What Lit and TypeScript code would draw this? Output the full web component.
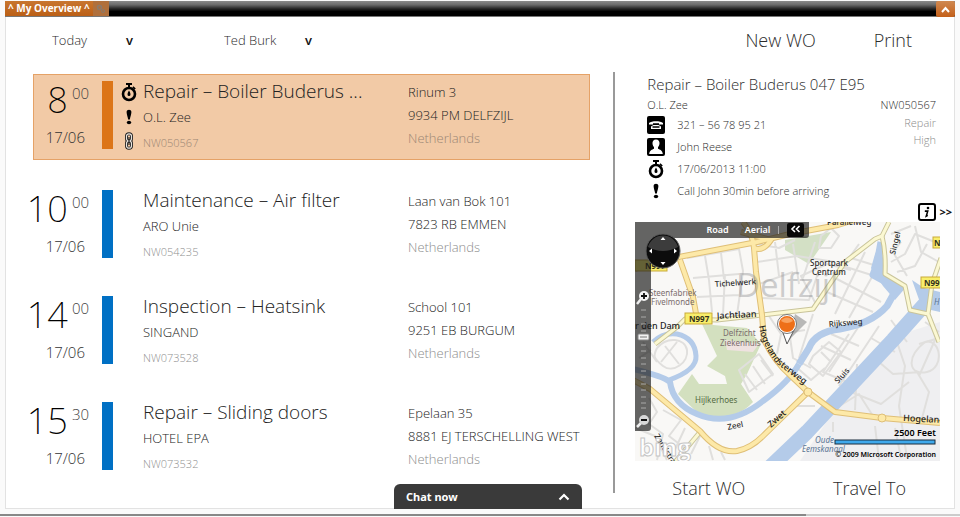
import { LitElement, html, svg, css, nothing } from "lit";
import { customElement, property } from "lit/decorators.js";

interface WorkOrder {
  hour: string;
  minute: string;
  title: string;
  client: string;
  code: string;
  street: string;
  city: string;
  selected?: boolean;
}

const ORDERS: WorkOrder[] = [
  { hour: "8", minute: "00", title: "Repair – Boiler Buderus ...", client: "O.L. Zee", code: "NW050567", street: "Rinum 3", city: "9934 PM DELFZIJL", selected: true },
  { hour: "10", minute: "00", title: "Maintenance – Air filter", client: "ARO Unie", code: "NW054235", street: "Laan van Bok 101", city: "7823 RB EMMEN" },
  { hour: "14", minute: "00", title: "Inspection – Heatsink", client: "SINGAND", code: "NW073528", street: "School 101", city: "9251 EB BURGUM" },
  { hour: "15", minute: "30", title: "Repair – Sliding doors", client: "HOTEL EPA", code: "NW073532", street: "Epelaan 35", city: "8881 EJ TERSCHELLING WEST" },
];

const stopwatch = html`<svg width="18" height="20" viewBox="0 0 18 20" aria-hidden="true">
  <path d="M6 1h6v2h-2v2h-2v-2h-2z" />
  <path d="M13.4 4.2l2.4 2.2-1.2 1.2-2.2-2z" />
  <circle cx="9" cy="12" r="6" fill="none" stroke="#000" stroke-width="2.6" />
  <path d="M9 8.4c.8 1.6 1.5 2.5 1.5 4a1.5 1.5 0 0 1-3 0c0-1.5.7-2.4 1.5-4z" />
</svg>`;

const exclaim = html`<svg width="18" height="16" viewBox="0 0 18 16" aria-hidden="true">
  <path d="M6.6 3c0-3 4.8-3 4.800 0 0 2.600-1.200 4.600-1.500 7.500h-1.800c-.3-2.900-1.500-4.900-1.500-7.500z" />
  <ellipse cx="9" cy="13.5" rx="2.200" ry="1.7" />
</svg>`;

const chain = html`<svg width="18" height="18" viewBox="0 0 18 18" aria-hidden="true">
  <g fill="none" stroke="#222" stroke-width="3">
    <rect x="6.5" y="1.8" width="5" height="7.2" rx="2.5" />
    <rect x="6.5" y="9" width="5" height="7.2" rx="2.5" />
  </g>
  <g fill="none" stroke="#e9e4de" stroke-width="1.2">
    <rect x="6.5" y="1.8" width="5" height="7.2" rx="2.5" />
    <rect x="6.5" y="9" width="5" height="7.2" rx="2.5" />
  </g>
  <path d="M9 5v8" stroke="#222" stroke-width="1.2" />
</svg>`;

const phone = html`<svg width="18" height="18" viewBox="0 0 18 18" aria-hidden="true">
  <rect x="0" y="0" width="18" height="18" rx="2" />
  <path d="M2 8.500v-1.500c2.500-2.500 11.500-2.500 14 0v1.500h-4v-1.300h-6v1.300z" fill="#fff" />
  <path d="M4 13v-2.500l2.500-1.500h5l2.500 1.500v2.500z" fill="#fff" />
  <path d="M5.500 11h7" stroke="#000" stroke-width="1.500" />
</svg>`;

const person = html`<svg width="18" height="18" viewBox="0 0 18 18" aria-hidden="true">
  <rect x="0" y="0" width="18" height="18" rx="2" />
  <path d="M9 1.500c2.500 0 3.700 1.800 3.500 4.100-.1 1.900-.9 3-1.500 3.700v1.400c1.800.8 4.500 1.600 4.800 5.300h-13.600c.3-3.700 3-4.500 4.800-5.300v-1.400c-.6-.7-1.400-1.800-1.500-3.700-.2-2.300 1-4.100 3.500-4.100z" fill="#fff" />
</svg>`;

const chevronUp = html`<svg width="12" height="8" viewBox="0 0 12 8" aria-hidden="true">
  <path d="M1.500 6.500l4.500-4.500 4.500 4.500" fill="none" stroke="#fff" stroke-width="2.200" />
</svg>`;

@customElement("work-order")
class WorkOrderRow extends LitElement {
  @property({ attribute: false }) order!: WorkOrder;

  static styles = css`
    :host { display: block; }
    .row {
      box-sizing: border-box;
      display: grid;
      grid-template-columns: 55px 11px 30px 265px minmax(0, 1fr);
      height: 86px;
      padding: 6px 0 0 13px;
      border: 1px solid transparent;
      color: #222;
      white-space: nowrap;
    }
    .selected { background: #f2caa6; border-color: #e5a267; }
    .when { display: flex; flex-direction: column; align-items: flex-end; padding-right: 13px; }
    .clock { display: flex; align-items: flex-start; height: 40px; gap: 4px; color: #000; }
    .hour { font-size: 36px; line-height: 38px; font-weight: 200; font-family: "Noto Sans", "Open Sans", sans-serif; }
    .minute { font-size: 15px; line-height: 24px; color: #444; }
    .date { font-size: 15px; line-height: 32px; padding-right: 4px; color: #333; }
    .bar { height: 68px; background: #0070c4; }
    .selected .bar { background: #dc7518; }
    .flags { display: flex; flex-direction: column; align-items: center; gap: 7px; padding: 1px 0 0 2px; }
    .title { margin: 0; font-size: 19px; font-weight: 300; line-height: 20px; }
    .client { font-size: 13px; line-height: 32px; }
    .code { font-size: 11px; line-height: 20px; color: #909090; }
    .where { font-size: 13px; line-height: 23px; font-style: normal; }
    .country { color: #8c8c8c; }
    .selected .code, .selected .country { color: #9b8674; }
    svg { display: block; }
  `;

  render() {
    const o = this.order;
    return html`<article class="row ${o.selected ? "selected" : ""}">
      <div class="when">
        <div class="clock"><span class="hour">${o.hour}</span><span class="minute">${o.minute}</span></div>
        <div class="date">17/06</div>
      </div>
      <div class="bar"></div>
      <div class="flags">${o.selected ? html`${stopwatch}${exclaim}${chain}` : nothing}</div>
      <div>
        <h2 class="title">${o.title}</h2>
        <div class="client">${o.client}</div>
        <div class="code">${o.code}</div>
      </div>
      <address class="where">
        <div>${o.street}</div>
        <div>${o.city}</div>
        <div class="country">Netherlands</div>
      </address>
    </article>`;
  }
}

const MINOR_STREETS = [
  "M52 36l52 -9 4 22 -6 44M58 56l46 -4M62 75l42 -2M70 34l4 24M86 31l3 26M74 58l3 32M90 52l-2 40",
  "M122 22l22 4 16 -8M122 40l40 -6 38 6M124 62l34 -12M124 76l50 2 8 -24M140 20l4 34M158 22l6 40M180 20l-12 36",
  "M182 84l-16 -30 26 -12 24 6M186 76l38 -54M192 70l46 20M200 56l46 24M208 44l38 12M216 36l26 8M200 92l30 -62M214 96l28 -50M186 14l10 -8 8 8 -8 12 -12 0z",
  "M256 40l14 -8 10 -20 20 8M262 50l18 -6 12 -22M266 20l-8 10 14 24M280 4l6 26 18 10M256 12l20 -8",
  "M134 94l12 18 -4 20M146 112l24 -4M152 94l6 42 18 10M178 92l-14 44M214 112l-26 38 24 10M224 104l-30 46M244 104l-40 60M186 124l30 14M196 112l28 12",
  "M22 126c10 -12 28 -10 30 2s-14 24 -24 16 -10 -10 -6 -18M30 124l14 18M42 120l-16 20M8 120l14 20M4 136l12 -8",
  "M14 176l8 14 -8 12 14 10 -6 26M28 188l18 10 -12 16 18 14M0 206l20 8 12 24M50 206l-14 30M56 232l10 -20 12 10M78 238l-4 -14M90 238l-4 -8",
  "M104 148l20 -16 14 20 -24 18zM110 152l12 16M118 144l12 18M126 138l12 16",
  "M178 134l16 -14 12 10 -18 24 -14 -12zM186 130l10 10M160 144l16 14 14 -12M162 184h18",
  "M222 160l22 -20 14 12 28 -2 M216 170l30 12 28 -22M220 188l2 -46M238 194l-14 -22 -26 16M262 120l8 24 -6 40 8 52M290 120c-20 16 -16 34 2 30s14 -34 -2 -30M282 150l12 20 -8 30M300 118l-16 36M198 200v10M260 206l6 30M240 204l4 34",
  "M290 100l14 10M284 122l20 -6M256 98l16 22M236 116l24 14",
];

const MAJOR_STREETS = [
  "M0 47L28 38 122 20 155 12 203 3 225 -4",
  "M45 38L58 75 62 97",
  "M108 0Q118 12 119 26L121 50 127 93 129 118Q140 140 155 153L173 170 200 190 247 196 305 201",
  "M119 26Q128 30 136 18L106 10",
  "M-2 158L15 167 65 209Q84 232 102 229 116 226 128 214L173 170",
];

const LANES = [
  "M20 122L42 105 50 97 82 98 127 93 178 87 210 40 240 17 247 14 254 0",
  "M247 14Q251 30 250 52L270 64 275 88 293 92 297 62 306 36M293 92L304 120",
  "M65 210L40 240",
];

const WATERWAYS = [
  { d: "M246 20L242 42 238 53 262 66 252 84Q236 102 205 107 180 110 174 126L164 142", w: 7 },
  { d: "M164 142Q154 160 128 179 94 206 62 192 38 182 35 160 28 154 -2 147", w: 6 },
  { d: "M34 158Q62 148 61 134 60 116 42 112 28 110 18 120", w: 5 },
  { d: "M290 82L258 118 172 210 132 248", w: 15 },
];

const map = svg`
  <rect width="305" height="239" fill="#f9f8f6" />
  <path d="M247 118L305 100V239H165z" fill="#efeff1" />
  <path d="M150 18L196 10 174 42 150 28z" fill="#d3e0c5" />
  <path d="M67 102L112 106 126 122 112 152 106 162 118 180Q100 200 66 194L43 172 57 152 64 162 92 162 90 154 72 144 82 134z" fill="#d3e0bf" />
  <path d="M90 118l34 4-6 8-26-2z" fill="#efe2e0" />
  <path d="M277 58l12 8 16 4v20l-18-4z" fill="#b4cbe9" />
  <g fill="none" stroke="#e0dfdd" stroke-width="2" stroke-linejoin="round">${MINOR_STREETS.map((d) => svg`<path d=${d} />`)}</g>
  <g fill="none" stroke="#b4cbe9" stroke-linejoin="round">${WATERWAYS.map((r) => svg`<path d=${r.d} stroke-width=${r.w} />`)}</g>
  <path d="M236 46l4-14 6-12 4 32 22 12-12 14-12-14z" fill="#b4cbe9" />
  <g fill="none" stroke="#c9c49a" stroke-width="5" stroke-linejoin="round">${LANES.map((d) => svg`<path d=${d} />`)}</g>
  <g fill="none" stroke="#fbf8d2" stroke-width="3" stroke-linejoin="round">${LANES.map((d) => svg`<path d=${d} />`)}</g>
  <g fill="none" stroke="#dfbf77" stroke-width="6" stroke-linejoin="round">${MAJOR_STREETS.map((d) => svg`<path d=${d} />`)}</g>
  <g fill="none" stroke="#fde9a8" stroke-width="4" stroke-linejoin="round">${MAJOR_STREETS.map((d) => svg`<path d=${d} />`)}</g>
  <circle cx="173" cy="170" r="4" fill="#fde9a8" stroke="#dfbf77" />
  <circle cx="247" cy="196" r="4" fill="#fde9a8" stroke="#dfbf77" />

  <text class="district" x="101" y="75">Delfzijl</text>

  <g fill="#f8ee6b" stroke="#c9a93a">
    <rect x="50" y="91" width="27" height="11" />
    <rect x="0" y="38" width="32" height="11" />
    <rect x="286" y="55" width="26" height="11" />
    <rect x="298" y="15" width="14" height="11" />
  </g>
  <g class="badge">
    <text x="54" y="100">N997</text><text x="10" y="47">N997</text>
    <text x="289" y="64">N99</text><text x="299" y="24">N</text>
  </g>
  <g class="place">
    <text x="14" y="74">Steenfabriek</text><text x="16" y="83">Fivelmonde</text>
    <text x="88" y="114">Delfzicht</text><text x="85" y="124">Ziekenhuis</text>
    <text class="park" x="60" y="181">Hijlkerhoes</text>
  </g>
  <g class="street">
    <text x="175" y="44">Sportpark</text><text x="177" y="53">Centrum</text>
    <text x="80" y="65" transform="rotate(-4 80 65)">Tichelwerk</text>
    <text x="194" y="105" transform="rotate(-5 194 105)">Rijksweg</text>
    <text x="260" y="33" transform="rotate(-76 260 33)">Singel</text>
    <text x="203" y="162" transform="rotate(-48 203 162)">Sluis</text>
    <text x="93" y="208" transform="rotate(-12 93 208)">Zeel</text>
    <text x="192" y="3">Parallelweg</text>
    <text x="19" y="214" transform="rotate(58 19 214)">Zandstraat</text>
  </g>
  <g class="avenue">
    <text x="82" y="97" transform="rotate(-3 82 97)">Jachtlaan</text>
    <text x="0" y="107">r den Dam</text>
    <text x="136" y="206" transform="rotate(-42 136 206)">Zwet</text>
    <text x="268" y="199" transform="rotate(3 268 199)">Hogelandsterweg</text>
    <path id="curve" d="M124 104Q127 124 142 142L172 165" fill="none" />
    <text><textPath href="#curve">Hogelandsterweg</textPath></text>
  </g>
  <g class="water"><text x="180" y="221">Oude</text><text x="167" y="230">Eemskanaal</text></g>
  <text class="water" x="299" y="83">H</text>

  <text class="bing" x="4" y="234">bing</text>

  <path d="M154 118L172 100 160 92z" fill="#777" opacity=".5" />
  <path d="M147 108l5 14 7-14z" fill="#fff" stroke="#555" />
  <circle cx="152" cy="102" r="9.500" fill="#fff" stroke="#777" />
  <circle cx="152" cy="102" r="8" fill="#ee6f18" />
  <path d="M146 99a7 7 0 0 1 12 0q-6 4-12 0z" fill="#f9a25e" />

  <rect x="200" y="218" width="100" height="4" fill="#3fa9ec" stroke="#1b2c3c" />
  <text class="scale" x="301" y="214">2500 Feet</text>
  <text class="credit" x="301" y="235">© 2009 Microsoft Corporation</text>
`;

@customElement("site-map")
class SiteMap extends LitElement {
  static styles = css`
    :host { display: block; position: relative; height: 239px; overflow: hidden; }
    .canvas { display: block; width: 100%; height: 100%; font-family: "Noto Sans", sans-serif; }
    .district { font: 400 33px "Open Sans", sans-serif; fill: #77787c; opacity: .34; }
    .badge { font-size: 8px; font-weight: 700; fill: #33321c; }
    .place { font-size: 8px; font-weight: 400; fill: #7b6d6d; }
    .park { fill: #536b43; }
    .street { font-size: 8px; font-weight: 500; fill: #2c2c2c; }
    .avenue { font-size: 9px; font-weight: 500; fill: #1d1d1d; }
    .water { font-size: 8px; font-weight: 400; font-style: italic; fill: #5a7594; }
    .bing { font: 700 24px "Open Sans", sans-serif; fill: #fff; stroke: #c6c6c6; }
    .scale { font-size: 9px; font-weight: 600; text-anchor: end; }
    .credit { font-size: 7px; font-weight: 600; text-anchor: end; }
    .side { position: absolute; left: 0; top: 0; width: 16px; height: 209px; background: rgba(30, 30, 30, .68); border-radius: 0 0 3px 0; }
    .modes {
      position: absolute; left: 16px; top: 0; width: 158px; height: 16px; box-sizing: border-box; padding-right: 5px;
      display: flex; justify-content: flex-end; align-items: center; gap: 8px;
      background: rgba(30, 30, 30, .68); border-radius: 0 0 3px 0;
    }
    button { border: 0; margin: 0; padding: 0; background: none; color: #fff; font: 600 9px/14px "Noto Sans", sans-serif; }
    .mode { margin-right: 8px; }
    .fold { width: 17px; height: 14px; background: #080808; border-radius: 2px; }
    .split { width: 1px; height: 8px; background: #aaa; }
    .compass, .zooms { position: absolute; display: block; }
    .compass { left: 10px; top: 11px; }
    .zooms { left: 0; top: 66px; }
  `;

  render() {
    return html`
      <svg class="canvas" viewBox="0 0 305 239" preserveAspectRatio="xMinYMin slice" role="img" aria-label="Map of Delfzijl">${map}</svg>
      <div class="side"></div>
      <div class="modes">
        <button class="mode">Road</button><button>Aerial</button><span class="split"></span>
        <button class="fold" aria-label="Collapse">
          <svg width="11" height="8" viewBox="0 0 11 8"><path d="M5 1L2 4l3 3M9.500 1l-3 3 3 3" fill="none" stroke="#fff" stroke-width="1.600" /></svg>
        </button>
      </div>
      <svg class="compass" width="36" height="36" viewBox="0 0 36 36" aria-hidden="true">
        <circle cx="18" cy="18" r="17" fill="#0c0c0c" stroke="#5c5c5c" />
        <path d="M3 14a15.500 15.500 0 0 1 30 0q-15 8-30 0z" fill="#3c3c3c" />
        <path d="M18 4l2.500 3h-5zM18 32l2.500-3h-5zM4 18l3-2.500v5zM32 18l-3-2.500v5z" fill="#fff" />
      </svg>
      <svg class="zooms" width="16" height="140" viewBox="0 0 16 140" aria-hidden="true">
        <path d="M6 11l-4 5M6 135l-4 4" stroke="#eee" stroke-width="2.500" />
        <circle cx="9" cy="8" r="5" fill="#f4f4f4" /><circle cx="9" cy="132" r="5" fill="#d8d8d8" />
        <path d="M6 8h6M9 5v6M6 132h6" stroke="#111" stroke-width="1.800" />
        <path d="M6 22h5M6 29h5M6 36h5M6 43h5M6 57h5M6 63h5M6 70h5M6 76h5M6 83h5M6 89h5M6 96h5M6 102h5M6 109h5M6 115h5M6 120h5" stroke="#a9a9a9" />
        <rect x="3" y="46" width="11" height="6" rx="1" fill="#f2f2f2" stroke="#888" /><path d="M5 49h7" stroke="#777" />
      </svg>`;
  }
}

@customElement("app-root")
class AppRoot extends LitElement {
  static styles = css`
    :host {
      display: flex; flex-direction: column; min-height: 100vh; box-sizing: border-box; padding: 1px 5px 0;
      background: #fafafa; color: #2c2c2c; font-family: "Open Sans", sans-serif; font-weight: 300;
    }
    button, select { border: 0; margin: 0; padding: 0; background: none; font: inherit; color: inherit; }
    .topbar { display: flex; justify-content: space-between; height: 15px; background: linear-gradient(#8a8a8a, #6b6b6b 25%, #2a2a2a 50%, #000 70%); border-bottom: 1px solid #777; }
    .tabs { display: flex; }
    .tab { padding: 0 3px; color: #fff; background: linear-gradient(#c8762f, #bb5f16); font: 700 10px/15px "Open Sans", sans-serif; }
    .wrench, .collapse { display: flex; align-items: center; justify-content: center; }
    .wrench { width: 16px; background: #b0703c; }
    .collapse { width: 19px; height: 16px; background: linear-gradient(#cf8850, #c4601a); border-radius: 2px; }
    .frame { flex: 1; display: flex; flex-direction: column; background: #fff; border: 1px solid #e2e2e2; border-top: 0; padding: 0 14px 0 27px; }
    .tools { display: flex; align-items: center; height: 45px; padding: 0 28px 0 19px; }
    .filter { display: flex; align-items: center; font-size: 13px; }
    .filter select { appearance: none; }
    .today select { width: 74px; }
    .person { margin-left: 91px; }
    .person select { width: 81px; }
    .arrow { color: #111; font-size: 13px; font-weight: 600; }
    .actions { display: flex; gap: 58px; margin-left: auto; font-size: 18px; }
    .body { flex: 1; display: grid; grid-template-columns: minmax(0, 561fr) 2px minmax(0, 305fr); column-gap: 20px; }
    .list { padding: 12px 3px 0 0; display: flex; flex-direction: column; gap: 20px; }
    .list .first { margin-bottom: 3px; }
    .rule { height: 421px; margin: 10px 0 0; background: #999; }
    .detail { padding-top: 11px; min-width: 0; }
    .info { display: flex; flex-wrap: wrap; justify-content: space-between; padding: 0 4px 0 12px; }
    .heading { width: 100%; margin: 0; font-size: 15px; line-height: 22px; font-weight: 300; }
    .facts { display: grid; grid-template-columns: 18px auto; column-gap: 12px; align-items: center; font-size: 11px; }
    .customer { grid-column: 1 / -1; line-height: 19px; }
    .fact { line-height: 22px; height: 22px; }
    .facts svg { display: block; }
    .tags { font-size: 11px; line-height: 17px; text-align: right; color: #8c8c8c; }
    .number { color: #2c2c2c; line-height: 19px; }
    .more { display: flex; justify-content: flex-end; align-items: center; gap: 3px; height: 20px; margin-right: -12px; }
    .next { font: 700 11px/18px "Open Sans", sans-serif; color: #111; }
    .footer { display: flex; justify-content: space-between; padding: 12px 34px 0 37px; font-size: 18px; line-height: 30px; }
    .chat {
      position: absolute; left: 394px; bottom: 8px; width: 188px; height: 25px; box-sizing: border-box; padding: 0 12px;
      display: flex; align-items: center; justify-content: space-between;
      background: #3a3a3a; border-radius: 6px 6px 0 0; color: #fff; font: 700 11px/25px "Noto Sans", sans-serif;
    }
    .strip { height: 2px; margin: 5px -5px 1px; background: linear-gradient(90deg, #888 84%, #ccc 84%); }
  `;

  render() {
    return html`
      <header class="topbar">
        <div class="tabs">
          <button class="tab">^ My Overview ^</button>
          <button class="wrench" aria-label="Settings">
            <svg width="10" height="10" viewBox="0 0 10 10"><circle cx="3.500" cy="3.500" r="2" fill="none" stroke="#8a7a6d" stroke-width="1.600" /><circle cx="7" cy="7" r="1.500" fill="none" stroke="#8a7a6d" /></svg>
          </button>
        </div>
        <button class="collapse" aria-label="Collapse">
          <svg width="9" height="7" viewBox="0 0 9 7"><path d="M1 6l3.500-4 3.500 4" fill="none" stroke="#fff" stroke-width="2" /></svg>
        </button>
      </header>
      <main class="frame">
        <div class="tools">
          <label class="filter today"><select aria-label="Day"><option>Today</option></select><span class="arrow">v</span></label>
          <label class="filter person"><select aria-label="Engineer"><option>Ted Burk</option></select><span class="arrow">v</span></label>
          <div class="actions"><button>New WO</button><button>Print</button></div>
        </div>
        <div class="body">
          <section class="list">
            ${ORDERS.map((o) => html`<work-order class=${o.selected ? "first" : ""} .order=${o}></work-order>`)}
          </section>
          <div class="rule"></div>
          <section class="detail">
            <div class="info">
              <h2 class="heading">Repair – Boiler Buderus 047 E95</h2>
              <div class="facts">
                <div class="customer">O.L. Zee</div>
                ${phone}<div class="fact">321 – 56 78 95 21</div>
                ${person}<div class="fact">John Reese</div>
                ${stopwatch}<div class="fact">17/06/2013 11:00</div>
                ${exclaim}<div class="fact">Call John 30min before arriving</div>
              </div>
              <div class="tags"><div class="number">NW050567</div><div>Repair</div><div>High</div></div>
            </div>
            <div class="more">
              <svg width="18" height="18" viewBox="0 0 18 18" aria-hidden="true">
                <rect x="1" y="1" width="16" height="16" rx="2" fill="#fff" stroke="#000" stroke-width="2" />
                <circle cx="10" cy="5" r="1.300" />
                <path d="M7 8h2.800l-1.600 5.200 1.600-.8M6.800 8.200h2" fill="none" stroke="#000" stroke-width="1.500" />
              </svg>
              <button class="next">&gt;&gt;</button>
            </div>
            <site-map></site-map>
            <div class="footer"><button>Start WO</button><button>Travel To</button></div>
          </section>
        </div>
      </main>
      <button class="chat">Chat now ${chevronUp}</button>
      <div class="strip"></div>`;
  }
}
